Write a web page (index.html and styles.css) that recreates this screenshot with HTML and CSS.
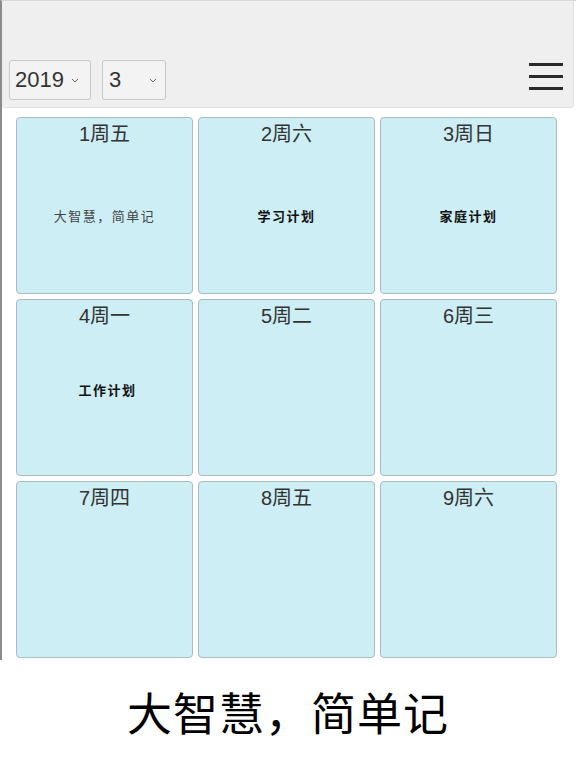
FILE: index.html
```html
<!DOCTYPE html>
<html lang="zh">
<head>
    <meta charset="UTF-8">
    <meta name="viewport" content="width=device-width, initial-scale=1.0">
    <title>日历计划</title>
    <link rel="stylesheet" href="styles.css">
</head>
<body>
    <div class="app">
        <div class="header">
            <div class="toolbar">
                <div class="select year">2019
                    <svg class="arrow" width="8" height="5" viewBox="0 0 8 5"><path d="M1 1l3 3 3-3" fill="none" stroke="#666" stroke-width="1"/></svg>
                </div>
                <div class="select month">3
                    <svg class="arrow" width="8" height="5" viewBox="0 0 8 5"><path d="M1 1l3 3 3-3" fill="none" stroke="#666" stroke-width="1"/></svg>
                </div>
                <div class="menu">
                    <span></span><span></span><span></span>
                </div>
            </div>
        </div>
        <div class="days">
            <div class="day"><div class="date">1周五</div><div class="note light">大智慧，简单记</div></div>
            <div class="day"><div class="date">2周六</div><div class="note">学习计划</div></div>
            <div class="day"><div class="date">3周日</div><div class="note">家庭计划</div></div>
            <div class="day"><div class="date">4周一</div><div class="note lower">工作计划</div></div>
            <div class="day"><div class="date">5周二</div></div>
            <div class="day"><div class="date">6周三</div></div>
            <div class="day"><div class="date">7周四</div></div>
            <div class="day"><div class="date">8周五</div></div>
            <div class="day"><div class="date">9周六</div></div>
        </div>
    </div>
    <div class="slogan">大智慧，简单记</div>
</body>
</html>
```

FILE: styles.css
```css
body {
    margin: 0;
    background-color: #fff;
    font-family: "Liberation Sans", "Noto Sans CJK SC", sans-serif;
    color: #222;
}

.app {
    height: 660px;
    border-left: 2px solid #8a8a8a;
    border-top: 1px solid #d8d8d8;
    box-sizing: border-box;
    overflow: hidden;
}

.header {
    height: 106px;
    margin-right: 2px;
    background-color: #efefef;
    border-right: 1px solid #e0e0e0;
    border-bottom: 1px solid #e2e2e2;
    border-radius: 0 0 3px 3px;
    display: flex;
    align-items: flex-end;
}

.toolbar {
    display: flex;
    align-items: center;
    width: 100%;
    padding: 0 10px 7px 7px;
}

.select {
    height: 40px;
    box-sizing: border-box;
    border: 1px solid #c8c8c8;
    border-radius: 3px;
    background-color: #f3f3f3;
    font-size: 22px;
    color: #333;
    display: flex;
    align-items: center;
    padding-left: 5px;
    position: relative;
}

.select.year {
    width: 82px;
}

.select.month {
    width: 64px;
    margin-left: 11px;
    padding-left: 6px;
}

.arrow {
    position: absolute;
    right: 11px;
    top: 17px;
}

.month .arrow {
    right: 8px;
}

.menu {
    margin-left: auto;
    margin-bottom: 7px;
    width: 34px;
    display: flex;
    flex-direction: column;
    gap: 9px;
}

.menu span {
    display: block;
    height: 3px;
    background-color: #2a2a2a;
}

.days {
    display: grid;
    grid-template-columns: repeat(3, 177px);
    grid-auto-rows: 177px;
    gap: 5px 5px;
    padding: 9px 0 0 14px;
}

.day {
    background-color: #cdeef4;
    border: 1px solid #a9bcc0;
    border-radius: 4px;
    text-align: center;
}

.date {
    font-size: 20px;
    color: #333;
    margin-top: 0;
}

.note {
    margin-top: 59px;
    font-size: 13px;
    font-weight: bold;
    letter-spacing: 1.5px;
    color: #111;
}

.note.light {
    font-weight: normal;
    color: #444;
}

.note.lower {
    margin-top: 51px;
    padding-left: 6px;
}

.slogan {
    text-align: center;
    font-size: 45px;
    color: #000;
    margin-top: 19px;
    letter-spacing: 1px;
}
```
